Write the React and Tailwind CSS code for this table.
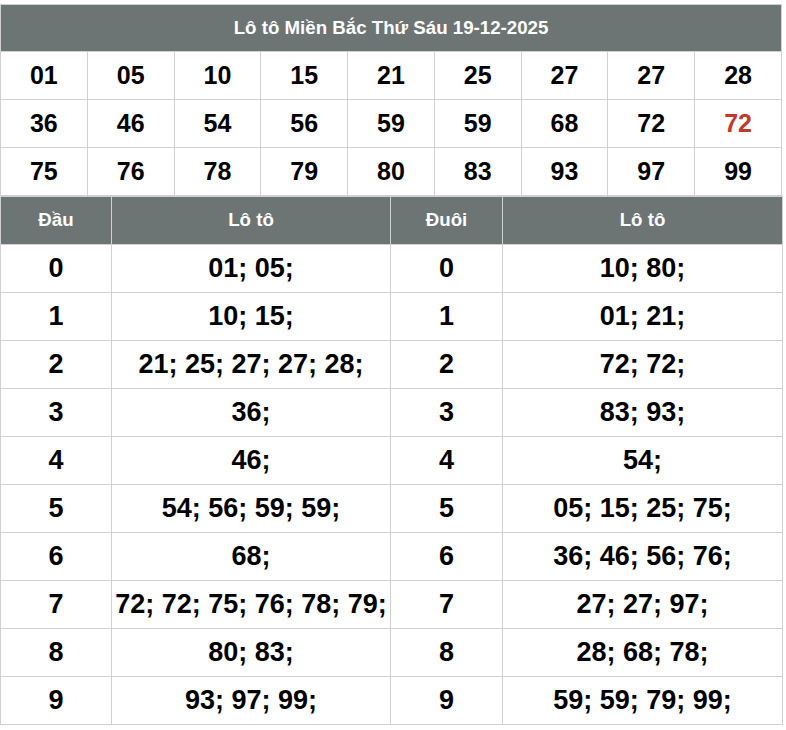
import React from "react";

const top = [
  ["01", "05", "10", "15", "21", "25", "27", "27", "28"],
  ["36", "46", "54", "56", "59", "59", "68", "72", "72"],
  ["75", "76", "78", "79", "80", "83", "93", "97", "99"],
];

const dau = [
  "01; 05;",
  "10; 15;",
  "21; 25; 27; 27; 28;",
  "36;",
  "46;",
  "54; 56; 59; 59;",
  "68;",
  "72; 72; 75; 76; 78; 79;",
  "80; 83;",
  "93; 97; 99;",
];

const duoi = [
  "10; 80;",
  "01; 21;",
  "72; 72;",
  "83; 93;",
  "54;",
  "05; 15; 25; 75;",
  "36; 46; 56; 76;",
  "27; 27; 97;",
  "28; 68; 78;",
  "59; 59; 79; 99;",
];

export default function App() {
  return (
    <div className="min-h-[730px] bg-white pt-[4px] font-['Liberation_Sans',Arial,sans-serif]">
      <table className="w-[782px] border-collapse table-fixed">
        <tbody>
          <tr>
            <td
              colSpan={9}
              className="h-[47px] bg-[#6c7474] text-center text-[18.7px] font-bold text-white border border-[#d0d0d0]"
            >
              Lô tô Miền Bắc Thứ Sáu 19-12-2025
            </td>
          </tr>
          {top.map((row, ri) => (
            <tr key={ri}>
              {row.map((n, ci) => (
                <td
                  key={ci}
                  className={`h-[48px] border border-[#d0d0d0] text-center text-[25px] font-bold ${
                    ri === 1 && ci === 8 ? "text-[#c0392b]" : "text-black"
                  }`}
                >
                  {n}
                </td>
              ))}
            </tr>
          ))}
        </tbody>
      </table>
      <table className="w-[782px] border-collapse table-fixed">
        <colgroup>
          <col className="w-[111px]" />
          <col className="w-[279px]" />
          <col className="w-[112px]" />
          <col className="w-[280px]" />
        </colgroup>
        <thead>
          <tr className="bg-[#6c7474] text-white text-[18.7px] font-bold">
            <th className="h-[48px] border border-[#d0d0d0]">Đầu</th>
            <th className="h-[48px] border border-[#d0d0d0]">Lô tô</th>
            <th className="h-[48px] border border-[#d0d0d0]">Đuôi</th>
            <th className="h-[48px] border border-[#d0d0d0]">Lô tô</th>
          </tr>
        </thead>
        <tbody>
          {dau.map((d, i) => (
            <tr key={i} className="text-black font-bold text-[27px]">
              <td className="h-[48px] border border-[#d0d0d0] text-center">{i}</td>
              <td className="h-[48px] border border-[#d0d0d0] text-center whitespace-nowrap">{d}</td>
              <td className="h-[48px] border border-[#d0d0d0] text-center">{i}</td>
              <td className="h-[48px] border border-[#d0d0d0] text-center whitespace-nowrap">{duoi[i]}</td>
            </tr>
          ))}
        </tbody>
      </table>
    </div>
  );
}
